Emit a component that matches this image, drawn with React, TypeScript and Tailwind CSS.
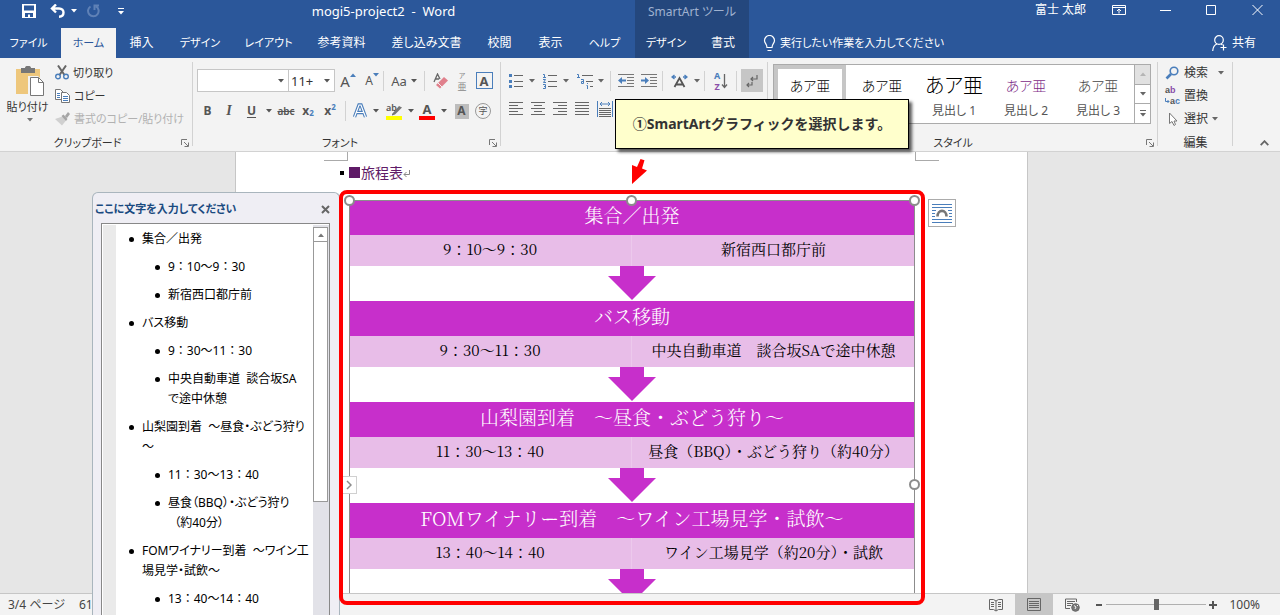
import type { ReactNode } from "react";

const serif = "font-['Noto_Serif_CJK_JP','Liberation_Serif','Noto_Sans_CJK_JP',serif]";

function Caret({ className = "" }: { className?: string }) {
  return (
    <svg width="6" height="4" viewBox="0 0 6 4" className={`shrink-0 ${className}`} fill="currentColor" aria-hidden="true">
      <path d="M0 0h6L3 3.5z" />
    </svg>
  );
}

function Tool({ label, className, children }: { label: string; className: string; children: ReactNode }) {
  return (
    <button type="button" aria-label={label} className={`flex h-[22px] shrink-0 items-center justify-center leading-4 ${className}`}>
      {children}
    </button>
  );
}

function Rule({ className = "" }: { className?: string }) {
  return <span className={`h-5 w-px shrink-0 bg-[#d2d2d2] ${className}`} />;
}

function Launcher({ label }: { label: string }) {
  return (
    <button type="button" aria-label={label} className="absolute right-1 bottom-[4px] text-[#777]">
      <svg width="8" height="8" viewBox="0 0 8 8" fill="none" stroke="currentColor" aria-hidden="true">
        <path d="M.5 6V.5H6M3 3l4 4M7.5 3.5v4h-4" />
      </svg>
    </button>
  );
}

function Group({ label, launcher, className, children }: { label?: string; launcher?: string; className: string; children: ReactNode }) {
  return (
    <section className={`relative flex shrink-0 flex-col ${className}`}>
      {children}
      {label && (
        <h2 className={`mt-auto h-4 text-center leading-4 text-[#333] ${launcher ? "pr-[18px] text-[11px]" : "text-[12px]"}`}>{label}</h2>
      )}
      {launcher && <Launcher label={launcher} />}
      <span className="absolute top-1 right-0 h-[84px] w-px bg-[#d2d2d2]" />
    </section>
  );
}

function Lines({ rows }: { rows: number[][] }) {
  return (
    <svg width="14" height="14" viewBox="0 0 14 14" stroke="#666" aria-hidden="true">
      {rows.map(([a, b], i) => (
        <path key={i} d={`M${a} ${i * 3 + 0.5}H${b}`} shapeRendering="crispEdges" />
      ))}
    </svg>
  );
}

const tabs = [
  { name: "ファイル", width: "w-[61px] pr-1 text-[11px]" },
  { name: "ホーム", width: "w-[55px] bg-[#f3f3f3] text-[11px] text-[#2b579a]" },
  { name: "挿入", width: "w-[51px]" },
  { name: "デザイン", width: "w-[66px] text-[11px]" },
  { name: "レイアウト", width: "w-[71px] text-[11px]" },
  { name: "参考資料", width: "w-[75px]" },
  { name: "差し込み文書", width: "w-[95px]" },
  { name: "校閲", width: "w-[51px]" },
  { name: "表示", width: "w-[51px]" },
  { name: "ヘルプ", width: "w-[57px] text-[11px]" },
];

function Header() {
  return (
    <header className="flex h-[58px] shrink-0 bg-[#2b579a] text-white">
      <div className="flex w-[635px] shrink-0 flex-col">
        <div className="flex h-7 items-center pb-1.5 pl-[22px]">
          <button type="button" aria-label="上書き保存" className="w-7">
            <svg width="14" height="14" viewBox="0 0 14 14" aria-hidden="true">
              <path d="M0 0h14v14H0z" fill="#fff" />
              <path d="M2 1.500h10v5H2zM3 9h8v4H8v-2.500H6V13H3z" fill="#2b579a" />
            </svg>
          </button>
          <button type="button" aria-label="元に戻す" className="flex w-[36px] items-center gap-1.5">
            <svg width="15" height="14" viewBox="0 0 15 14" fill="none" stroke="#fff" strokeWidth="2.400" aria-hidden="true">
              <path d="M6 .5 2 4.500l4 4M2.500 4.500H9c3 0 4.500 1.800 4.500 4S12 12.700 9 12.700" />
            </svg>
            <Caret />
          </button>
          <button type="button" aria-label="繰り返し" className="w-[32px]">
            <svg width="14" height="14" viewBox="0 0 14 14" fill="none" stroke="#5f81b6" strokeWidth="2" aria-hidden="true">
              <path d="M4.500 2.500A5.300 5.300 0 1 0 10 2.400M8.500 6V1.500H13" />
            </svg>
          </button>
          <button type="button" aria-label="クイック アクセス ツール バーのカスタマイズ" className="w-[14px]">
            <svg width="6" height="7" viewBox="0 0 6 7" fill="#fff" aria-hidden="true">
              <path d="M0 0h6v1H0zM0 3h6L3 6.500z" />
            </svg>
          </button>
          <h1 className="flex-1 text-center text-[13px] leading-5 whitespace-pre">mogi5-project2  -  Word</h1>
        </div>
        <nav className="flex h-[30px] text-[12px] leading-4">
          {tabs.map((t) => (
            <button key={t.name} type="button" className={`flex items-center justify-center whitespace-nowrap ${t.width}`}>
              {t.name}
            </button>
          ))}
        </nav>
      </div>
      <div className="flex w-[114px] shrink-0 flex-col bg-[#24477d]">
        <div className="flex h-7 items-center justify-center pb-1 text-[12px] leading-4 text-[#a0b2d0]">SmartArt ツール</div>
        <div className="flex h-[30px] text-[12px] leading-4">
          <button type="button" className="w-[62px] text-[11px]">デザイン</button>
          <button type="button" className="w-[52px]">書式</button>
        </div>
      </div>
      <div className="flex min-w-0 flex-1 flex-col">
        <div className="flex h-7 items-center justify-end pr-[17px] pb-2 text-[12px] leading-4">
          <span className="mr-[26px] text-[12px]">富士 太郎</span>
          <button type="button" aria-label="リボンの表示オプション" className="mr-[34px]">
            <svg width="14" height="10" viewBox="0 0 14 10" fill="none" stroke="#fff" aria-hidden="true">
              <path d="M.5.500h13v9H.5zM.5 2.500h13M7 8.500V4M5 6l2-2 2 2" />
            </svg>
          </button>
          <button type="button" aria-label="最小化" className="mr-[35px]">
            <svg width="11" height="10" viewBox="0 0 11 10" stroke="#fff" aria-hidden="true"><path d="M0 5.500h11" /></svg>
          </button>
          <button type="button" aria-label="最大化" className="mr-[35px]">
            <svg width="11" height="10" viewBox="0 0 11 10" fill="none" stroke="#fff" aria-hidden="true"><path d="M.5.500h9v9h-9z" /></svg>
          </button>
          <button type="button" aria-label="閉じる">
            <svg width="11" height="10" viewBox="0 0 11 10" stroke="#fff" aria-hidden="true"><path d="M.5 0l10 10M10.500 0l-10 10" /></svg>
          </button>
        </div>
        <div className="flex h-[30px] items-center pr-6 pl-[14px] text-[12px] leading-4">
          <svg width="13" height="17" viewBox="0 0 13 17" fill="none" stroke="#fff" strokeWidth="1.200" aria-hidden="true">
            <path d="M4 12.500C4 9 1.500 8.500 1.500 5.500a5 5 0 0 1 10 0C11.500 8.500 9 9 9 12.500zM4.500 15.500h4" />
          </svg>
          <input
            aria-label="操作アシスト"
            placeholder="実行したい作業を入力してください"
            className="ml-1 w-[220px] bg-transparent text-[11px] leading-4 outline-none placeholder:text-white placeholder:opacity-100"
          />
          <button type="button" className="ml-auto flex items-center gap-1">
            <svg width="16" height="16" viewBox="0 0 16 16" fill="none" stroke="#fff" strokeWidth="1.200" aria-hidden="true">
              <circle cx="7" cy="5" r="4.300" />
              <path d="M.7 16C1 12 3 9.700 5 9M9 9l1.500 1M11.500 9.500v6M8.500 12.500h6" />
            </svg>
            共有
          </button>
        </div>
      </div>
    </header>
  );
}

function ClipboardGroup() {
  return (
    <Group label="クリップボード" launcher="クリップボードの設定" className="w-[193px]">
      <div className="flex pt-[3px]">
        <button type="button" className="flex w-[55px] shrink-0 flex-col items-center pt-[5px] text-[11px] leading-4">
          <svg width="30" height="31" viewBox="0 0 30 31" className="ml-1" aria-hidden="true">
            <path d="M1 3h24v25H1z" fill="#eec77c" />
            <path d="M6 2h4c0-3 6-3 6 0h4v5H6z" fill="#777" />
            <path d="M13 10h10l6 6v15H13z" fill="#f3f3f3" />
            <path d="M15.500 11.500h8l5 5v13h-13z" fill="#fff" stroke="#777" />
            <path d="M23.500 11.500v5h5" fill="none" stroke="#777" />
          </svg>
          <span className="mt-[2px]">貼り付け</span>
          <Caret className="mt-[3px] ml-1 text-[#777]" />
        </button>
        <div className="flex flex-col text-[11px] leading-4 whitespace-nowrap">
          <button type="button" className="flex h-[23px] items-center gap-1">
            <svg width="14" height="15" viewBox="0 0 14 15" fill="none" aria-hidden="true">
              <path d="M3 .5 9.500 10M11 .5 4.500 10" stroke="#666" strokeWidth="2" />
              <circle cx="3" cy="11.500" r="2.300" stroke="#4a7ebb" strokeWidth="1.400" />
              <circle cx="11" cy="11.500" r="2.300" stroke="#4a7ebb" strokeWidth="1.400" />
            </svg>
            切り取り
          </button>
          <button type="button" className="flex h-[23px] items-center gap-1">
            <svg width="15" height="14" viewBox="0 0 15 14" fill="#fff" stroke="#777" aria-hidden="true">
              <path d="M.5.500h5l3 3v7h-8z" />
              <path d="M6.500 3.500h5l3 3v7h-8z" />
              <path d="M2 4.500h3M2 6.500h3M2 8.500h3M8 7.500h5M8 9.500h5M8 11.500h5" stroke="#4a7ebb" />
            </svg>
            コピー
          </button>
          <button type="button" disabled className="flex h-[23px] items-center gap-1 text-[#b1b1b1]">
            <svg width="15" height="14" viewBox="0 0 15 14" aria-hidden="true">
              <path d="m7.500 4.500 3.500 4-4 5L0 7z" fill="#d0d0d0" />
              <path d="m6.500 4 2-1.500 4 4.500-1.500 2zM10 4l3-4 2 2-3 4z" fill="#a5a5a5" />
            </svg>
            書式のコピー/貼り付け
          </button>
        </div>
      </div>
    </Group>
  );
}

function FontGroup() {
  return (
    <Group label="フォント" launcher="フォントの設定" className="w-[308px] pl-1 text-[#555]">
      <div className="flex items-center pt-[11px]">
        <div className="flex h-[23px] w-[92px] items-center border border-[#c6c6c6] bg-white pr-1">
          <input aria-label="フォント名" className="min-w-0 flex-1 outline-none" />
          <Caret />
        </div>
        <div className="-ml-px flex h-[23px] w-[47px] items-center border border-[#c6c6c6] bg-white pr-1 pl-0.5">
          <input aria-label="フォント サイズ" defaultValue="11+" className="min-w-0 flex-1 text-[13px] leading-5 text-[#333] outline-none" />
          <Caret />
        </div>
        <Tool label="フォント サイズの拡大" className="w-[26px] text-[15px]">
          A<Caret className="mb-3 rotate-180 text-[#4a7ebb]" />
        </Tool>
        <Tool label="フォント サイズの縮小" className="w-[22px] text-[12px]">
          A<Caret className="mb-3 text-[#4a7ebb]" />
        </Tool>
        <Rule />
        <Tool label="文字種の変換" className="w-10 gap-1 text-[13px]">
          Aa <Caret />
        </Tool>
        <Rule />
        <Tool label="すべての書式をクリア" className="w-[31px]">
          <svg width="15" height="16" viewBox="0 0 15 16" aria-hidden="true">
            <path d="M1 9 4.500 1 7 6M2.500 6H6" fill="none" stroke="#666" strokeWidth="1.300" />
            <path d="m3 12 8-8 4 3.500-8 8z" fill="#e0808c" />
            <path d="m4.500 9.500 4.500 4.500" stroke="#f3f3f3" />
          </svg>
        </Tool>
        <Tool label="ルビ" className="w-3 flex-col text-[#888]">
          <span className="text-[7px] leading-[11px]">ア</span>
          <span className="text-[9px] leading-[11px]">亜</span>
        </Tool>
        <Tool label="囲み線" className="ml-0.5 w-7">
          <span className="flex size-[17px] items-center justify-center border border-[#4a7ebb] text-[13px] leading-4 font-bold">A</span>
        </Tool>
      </div>
      <div className="flex items-center pt-2 text-[12px]">
        <Tool label="太字" className="w-[21px] font-bold">B</Tool>
        <Tool label="斜体" className="w-[22px] font-['Liberation_Serif',serif] text-[14px] font-bold italic">I</Tool>
        <Tool label="下線" className="w-[35px] gap-2.5 pl-1"><span className="font-bold underline underline-offset-2">U</span><Caret /></Tool>
        <Tool label="取り消し線" className="w-[22px] text-[10px] font-semibold line-through">abc</Tool>
        <Tool label="下付き" className="w-[22px] font-bold">x<sub className="text-[8px] leading-3 text-[#4a7ebb]">2</sub></Tool>
        <Tool label="上付き" className="w-[22px] font-bold">x<sup className="text-[8px] leading-3 text-[#4a7ebb]">2</sup></Tool>
        <Rule className="ml-1" />
        <Tool label="文字の効果と体裁" className="w-[35px] gap-1.5 pl-1">
          <svg width="14" height="16" viewBox="0 0 14 16" fill="none" aria-hidden="true">
            <path d="M1.500 14 6 2h2l4.500 12M3.500 9.500h7" stroke="#4a7ebb" strokeWidth="3.400" />
            <path d="M1.500 14 6 2h2l4.500 12M3.500 9.500h7" stroke="#fff" strokeWidth="1.200" />
          </svg>
          <Caret />
        </Tool>
        <Tool label="蛍光ペンの色" className="w-[33px] gap-1.5 pl-1">
          <svg width="16" height="17" viewBox="0 0 16 17" className="overflow-visible" aria-hidden="true">
            <text x="0" y="8" fontSize="9" fontWeight="600" fill="#555">ab</text>
            <path d="m6 11 7-8 3 1.500-7 7-3 1z" fill="#777" />
            <path d="M0 13h16v4H0z" fill="#ff0" />
          </svg>
          <Caret />
        </Tool>
        <Tool label="フォントの色" className="w-[34px] gap-1.5 pl-1">
          <span className="flex h-[18px] w-4 items-center justify-center border-b-4 border-[#f00] text-[13px] leading-4 font-bold">A</span>
          <Caret />
        </Tool>
        <Tool label="文字の網かけ" className="w-[27px]">
          <span className="flex h-[15px] w-[14px] items-center justify-center bg-[#bdbdbd] text-[12px] leading-4 font-bold">A</span>
        </Tool>
        <Tool label="囲い文字" className="w-4">
          <span className="flex size-4 shrink-0 items-center justify-center rounded-full border border-[#999] text-[9px] leading-3">字</span>
        </Tool>
      </div>
    </Group>
  );
}

function ParagraphGroup() {
  return (
    <Group className="w-[267px] pl-[8px] text-[#666]">
      <div className="flex items-center pt-[11px]">
        <Tool label="箇条書き" className="w-[34px] gap-1.5 pr-2">
          <svg width="14" height="14" viewBox="0 0 14 14" className="shrink-0" aria-hidden="true">
            <path d="M5 1.500h9M5 7.500h9M5 12.500h9" stroke="#666" />
            <path d="M0 0h3v3H0zM0 6h3v3H0zM0 11h3v3H0z" fill="#4a7ebb" />
          </svg>
          <Caret />
        </Tool>
        <Tool label="段落番号" className="w-[34px] gap-1.5 pr-2">
          <svg width="14" height="16" viewBox="0 0 14 16" className="shrink-0" fill="none" aria-hidden="true">
            <path d="M5 2.500h9M5 8.500h9M5 13.500h9" stroke="#666" />
            <path d="M0 1.500h1.500V4M0 4.500h3M0 6.500h2.500L.5 9.500H3M0 11.500h2.500v4H0M1 13.500h1.500" stroke="#4a7ebb" />
          </svg>
          <Caret />
        </Tool>
        <Tool label="アウトライン" className="w-[33px] gap-1 pr-1.5">
          <svg width="17" height="16" viewBox="0 0 17 16" className="shrink-0" fill="none" aria-hidden="true">
            <path d="M5 2.500h11M9 8.500h7M13 13.500h3" stroke="#666" />
            <path d="M0 1.500h1.500V4M0 4.500h3M4 6.500h2.500v4H4.500v-2h2M10.500 10v1M9.500 12.500h1V16" stroke="#4a7ebb" />
          </svg>
          <Caret />
        </Tool>
        <Rule />
        <Tool label="インデントを減らす" className="w-6 pl-[6px]">
          <svg width="17" height="14" viewBox="0 0 17 14" className="shrink-0" aria-hidden="true">
            <path d="M0 .5h16M9 3.500h7M9 6.500h7M9 9.500h7M0 12.500h16" stroke="#777" />
            <path d="M0 6.500l4-3.500v2.500h4v2H4V10z" fill="#4a7ebb" />
          </svg>
        </Tool>
        <Tool label="インデントを増やす" className="w-[23px] pl-[5px]">
          <svg width="17" height="14" viewBox="0 0 17 14" className="shrink-0" aria-hidden="true">
            <path d="M0 .5h16M9 3.500h7M9 6.500h7M9 9.500h7M0 12.500h16" stroke="#777" />
            <path d="M8 6.500 4 3v2.500H0v2h4V10z" fill="#4a7ebb" />
          </svg>
        </Tool>
        <Rule className="ml-1" />
        <Tool label="拡張書式" className="w-[41px] gap-1.5 pl-1">
          <svg width="17" height="14" viewBox="0 0 17 14" fill="none" className="shrink-0" aria-hidden="true">
            <path d="M3.500 13 8.500 4l5 9M5 10.500h7" stroke="#555" strokeWidth="1.800" />
            <path d="M3.500 1 1 3l2.500 2M1 3h4M13.500 1 16 3l-2.500 2M16 3h-4" stroke="#4a7ebb" strokeWidth="1.400" />
          </svg>
          <Caret />
        </Tool>
        <Rule />
        <Tool label="並べ替え" className="w-[31px]">
          <span className="flex w-2 flex-col text-[9px] leading-[11px] font-bold">
            <span className="text-[#4a7ebb]">A</span>
            <span className="text-[#8a4ea8]">Z</span>
          </span>
          <svg width="7" height="16" viewBox="0 0 7 16" fill="none" stroke="#666" strokeWidth="1.300" aria-hidden="true">
            <path d="M3.500 1v13M1 11.500l2.500 3 2.500-3" />
          </svg>
        </Tool>
        <Rule />
        <button type="button" aria-label="編集記号の表示/非表示" aria-pressed="true" className="ml-1 flex h-[23px] w-[22px] items-center justify-center bg-[#c6c6c6]">
          <svg width="12" height="14" viewBox="0 0 12 14" fill="none" stroke="#666" strokeWidth="1.200" aria-hidden="true">
            <path d="M11 1v4H5M7 3 5 5l2 2M6 8v3H1M3 9l-2 2 2 2" />
          </svg>
        </button>
      </div>
      <div className="flex items-center gap-2 pt-[9px]">
        <button type="button" aria-label="左揃え"><Lines rows={[[0, 14], [0, 9], [0, 14], [0, 9], [0, 14]]} /></button>
        <button type="button" aria-label="中央揃え"><Lines rows={[[0, 14], [3, 11], [0, 14], [3, 11], [0, 14]]} /></button>
        <button type="button" aria-label="右揃え"><Lines rows={[[0, 14], [5, 14], [0, 14], [5, 14], [0, 14]]} /></button>
        <button type="button" aria-label="両端揃え"><Lines rows={[[0, 14], [0, 14], [0, 14], [0, 14], [0, 14]]} /></button>
        <button type="button" aria-label="均等割り付け">
          <svg width="16" height="16" viewBox="0 0 16 16" fill="none" aria-hidden="true">
            <path d="M.5 0v16M15.500 0v16M3 3h10M5 1 3 3l2 2M11 1l2 2-2 2" stroke="#4a7ebb" />
            <path d="M2 7.500h12M2 9.500h12M2 11.500h12M2 13.500h12M2 15.500h12" stroke="#666" />
          </svg>
        </button>
      </div>
    </Group>
  );
}

const styles = [
  { id: "body", name: "", look: "text-[14px] text-black", frame: "border-4 border-[#c6c6c6]" },
  { id: "tight", name: "", look: "text-[14px] text-black", frame: "border-4 border-transparent" },
  { id: "h1", name: "見出し 1", look: "text-[20px] text-black", frame: "border-4 border-transparent" },
  { id: "h2", name: "見出し 2", look: "text-[14px] text-[#7c2a86]", frame: "border-4 border-transparent" },
  { id: "h3", name: "見出し 3", look: "text-[14px] text-[#444]", frame: "border-4 border-transparent" },
];

function StylesGroup() {
  return (
    <Group label="スタイル" launcher="スタイルの設定" className="w-[390px] pr-[7px] pl-[5px]">
      <div className="mt-[6px] flex h-[60px] border border-[#ababab] bg-white">
        {styles.map((s) => (
          <button key={s.id} type="button" className={`flex w-[72px] shrink-0 flex-col items-center ${s.frame}`}>
            <span className={`flex h-[34px] items-center leading-6 font-light whitespace-nowrap ${s.look}`}>あア亜</span>
            {s.name && <span className="text-[12px] leading-4 whitespace-nowrap text-[#555]">{s.name}</span>}
          </button>
        ))}
        <div className="flex flex-1 flex-col border-l border-[#ababab] text-[#666]">
          <button type="button" aria-label="前の行" className="flex flex-1 items-center justify-center border-b border-[#ababab] bg-[#e1e1e1] text-[#b5b5b5]"><Caret className="rotate-180" /></button>
          <button type="button" aria-label="次の行" className="flex flex-1 items-center justify-center border-b border-[#ababab]"><Caret /></button>
          <button type="button" aria-label="その他" className="flex flex-1 flex-col items-center justify-center gap-0.5"><span className="h-px w-1.5 bg-[#666]" /><Caret /></button>
        </div>
      </div>
    </Group>
  );
}

function EditGroup() {
  return (
    <Group label="編集" className="w-[75px] pt-[3px] text-[12px] leading-4">
      <button type="button" className="ml-[7px] flex h-[23px] items-center">
        <svg width="15" height="14" viewBox="0 0 15 14" className="mr-[4px]" fill="none" stroke="#4a7ebb" aria-hidden="true">
          <circle cx="9" cy="5" r="3.800" strokeWidth="1.600" />
          <path d="M6 8 1.500 12.500" strokeWidth="2.600" />
        </svg>
        検索<Caret className="ml-2.5 text-[#666]" />
      </button>
      <button type="button" className="ml-[7px] flex h-[23px] items-center">
        <span className="mr-[2px] flex w-[17px] flex-col font-['Liberation_Sans',sans-serif] text-[9px] leading-[11px] font-bold">
          <span className="flex">
            <span className="text-[#555]">a</span>
            <span className="text-[#8a4ea8]">b</span>
          </span>
          <span className="flex items-center">
            <svg width="5" height="6" viewBox="0 0 5 6" fill="none" stroke="#4a7ebb" aria-hidden="true"><path d="M.5 0v3.500H4M2.500 2 4 3.500 2.500 5" /></svg>
            <span className="text-[#555]">a</span>
            <span className="text-[#4a7ebb]">c</span>
          </span>
        </span>
        置換
      </button>
      <button type="button" className="ml-[7px] flex h-[23px] items-center">
        <svg width="15" height="14" viewBox="0 0 15 14" className="mr-[4px]" fill="#fff" stroke="#777" aria-hidden="true">
          <path d="M4.500 1v10.500l2.500-2 2 4 1.500-1-1.500-3.500h3z" />
        </svg>
        選択<Caret className="ml-1 text-[#666]" />
      </button>
    </Group>
  );
}

function DownArrow() {
  return (
    <svg width="48" height="35" viewBox="0 0 48 35" className="mx-auto block" fill="#c72fcb" aria-hidden="true">
      <path d="M12 0h24v10h12L24 34 0 10h12z" />
    </svg>
  );
}

const steps = [
  { title: "集合／出発", time: "9：10～9：30", place: "新宿西口都庁前" },
  { title: "バス移動", time: "9：30～11：30", place: "中央自動車道　談合坂SAで途中休憩" },
  { title: "山梨園到着　～昼食・ぶどう狩り～", time: "11：30～13：40", place: "昼食（BBQ）・ぶどう狩り（約40分）" },
  { title: "FOMワイナリー到着　～ワイン工場見学・試飲～", time: "13：40～14：40", place: "ワイン工場見学（約20分）・試飲" },
];

function Handle({ className }: { className: string }) {
  return <span className={`absolute size-[11px] rounded-full border-2 border-[#8c8c8c] bg-white ${className}`} />;
}

function SmartArt() {
  return (
    <div className={`relative mt-4 ${serif}`}>
      {steps.map((s) => (
        <section key={s.title}>
          <h3 className="h-[35px] bg-[#c72fcb] text-center text-[19px] leading-[30px] font-light whitespace-nowrap text-white">{s.title}</h3>
          <div className="grid h-[31px] grid-cols-2 bg-[#e8bde8] text-center text-[15px] leading-[28px] whitespace-nowrap text-black">
            <p className="border-r border-[#ecc9ec]">{s.time}</p>
            <p>{s.place}</p>
          </div>
          <DownArrow />
        </section>
      ))}
      <span className="absolute inset-0 border border-b-0 border-[#8c8c8c]" />
      <Handle className="-top-[5px] -left-[5px]" />
      <Handle className="-top-[5px] left-[277px]" />
      <Handle className="-top-[5px] -right-[5px]" />
      <Handle className="top-[279px] -right-[5px]" />
      <button type="button" aria-label="テキスト ウィンドウ" className="absolute top-[276px] -left-[9px] flex h-[18px] w-[17px] items-center justify-center border border-[#d0d0d0] bg-white">
        <svg width="6" height="10" viewBox="0 0 6 10" fill="none" stroke="#8c8c8c" strokeWidth="1.500" aria-hidden="true"><path d="m1 1 4 4-4 4" /></svg>
      </button>
      <button type="button" aria-label="レイアウト オプション" className="absolute -top-px -right-[41px] flex size-7 items-center justify-center border border-[#ababab] bg-white">
        <svg width="20" height="20" viewBox="0 0 20 20" fill="none" aria-hidden="true">
          <path d="M0 1.500h20M0 4.500h20M0 7.500h4M16 7.500h4M0 10.500h3M17 10.500h3M0 13.500h3M17 13.500h3M0 16.500h20M0 19.500h20" stroke="#4a7ebb" />
          <path d="M5.500 13.500C5.500 6 14.500 6 14.500 13.500" stroke="#777" strokeWidth="2.600" />
        </svg>
      </button>
    </div>
  );
}

const outline = [
  { level: 1, lines: ["集合／出発"] },
  { level: 2, lines: ["9：10～9：30"] },
  { level: 2, lines: ["新宿西口都庁前"] },
  { level: 1, lines: ["バス移動"] },
  { level: 2, lines: ["9：30～11：30"] },
  { level: 2, lines: ["中央自動車道  談合坂SA", "で途中休憩"] },
  { level: 1, lines: ["山梨園到着  ～昼食・ぶどう狩り", "～"] },
  { level: 2, lines: ["11：30～13：40"] },
  { level: 2, lines: ["昼食（BBQ）・ぶどう狩り", "  （約40分）"] },
  { level: 1, lines: ["FOMワイナリー到着  ～ワイン工", "場見学・試飲～"] },
  { level: 2, lines: ["13：40～14：40"] },
];

function TextPane() {
  return (
    <aside className="absolute top-[192px] bottom-0 left-[92px] flex w-[248px] flex-col rounded-t-md border border-b-0 border-[#a9b5bd] bg-[#efeef4] pr-[9px] pl-2">
      <div className="-ml-1.5 flex h-[30px] shrink-0 items-center justify-between pt-0.5">
        <h2 className="text-[11px] leading-4 font-bold text-[#1a4a80] [font-feature-settings:'palt']">ここに文字を入力してください</h2>
        <button type="button" aria-label="閉じる" className="text-[#666]">
          <svg width="9" height="9" viewBox="0 0 9 9" stroke="currentColor" strokeWidth="2" aria-hidden="true"><path d="m1 1 7 7M8 1 1 8" /></svg>
        </button>
      </div>
      <div className="flex min-h-0 flex-1 overflow-hidden border border-b-0 border-[#888] bg-white pt-px pl-px">
        <div className="w-[13px] shrink-0 bg-[#eaeaea]" />
        <ul className="flex flex-1 flex-col gap-2 pt-1 text-[12px] leading-5 text-black">
          {outline.map((o, i) => (
            <li key={i} className={o.level === 1 ? "flex gap-2 pl-[13px]" : "flex gap-2 pl-[39px]"}>
              <span className="mt-2 size-[5px] shrink-0 rounded-full bg-black" />
              <div className={o.lines.join("").match(/[ぁ-んァ-ヶ]/) ? "[font-feature-settings:'palt']" : "[font-feature-settings:normal]"}>
                {o.lines.map((l) => (
                  <p key={l} className="whitespace-pre">{l}</p>
                ))}
              </div>
            </li>
          ))}
        </ul>
        <div className="flex w-4 shrink-0 flex-col bg-[#e2e2e8] pt-0.5">
          <button type="button" aria-label="上へスクロール" className="flex h-[15px] w-[15px] shrink-0 items-center justify-center border border-[#999] bg-white text-[#777]">
            <Caret className="rotate-180" />
          </button>
          <div className="h-[260px] w-[15px] shrink-0 border border-t-0 border-[#999] bg-white" />
        </div>
      </div>
    </aside>
  );
}

function StatusBar() {
  return (
    <footer className="flex h-[22px] shrink-0 items-center border-t border-[#c6c6c6] bg-[#f3f3f3] pr-5 pl-2 text-[12px] leading-4 text-[#444]">
      <span className="w-[71px] [font-feature-settings:'palt']">3/4 ページ</span>
      <span>61</span>
      <div className="ml-auto flex h-full items-center">
        <button type="button" aria-label="閲覧モード" className="mr-3">
          <svg width="14" height="14" viewBox="0 0 14 14" fill="none" stroke="#666" aria-hidden="true">
            <path d="M.5 1.500h4L7 3l2.500-1.500h4v10h-4L7 13l-2.500-1.500h-4zM7 3v10M2 4.500h3M2 6.500h3M2 8.500h3M9 4.500h3M9 6.500h3M9 8.500h3" />
          </svg>
        </button>
        <button type="button" aria-label="印刷レイアウト" aria-pressed="true" className="flex h-full w-[38px] items-center justify-center bg-[#c6c6c6]">
          <svg width="14" height="13" viewBox="0 0 14 13" fill="none" stroke="#666" aria-hidden="true">
            <path d="M.5.500h13v12H.5zM2 3.500h10M2 5.500h10M2 7.500h10M2 9.500h10" />
          </svg>
        </button>
        <button type="button" aria-label="Web レイアウト" className="mr-4 ml-3">
          <svg width="15" height="14" viewBox="0 0 15 14" fill="none" stroke="#666" aria-hidden="true">
            <path d="M5 10.500H.5V1h11v3M2 3.500h8M2 5.500h6M2 7.500h4" />
            <circle cx="10.500" cy="9.500" r="3.800" fill="#777" />
            <path d="M9 7.500l2 1.500-1 2M12 7l1 1" stroke="#f3f3f3" />
          </svg>
        </button>
        <button type="button" aria-label="縮小" className="mr-1"><span className="block h-0.5 w-1.5 bg-[#555]" /></button>
        <input
          type="range"
          aria-label="ズーム"
          defaultValue={50}
          className="h-3 w-[100px] appearance-none bg-[linear-gradient(#b0b0b0,#b0b0b0)] bg-[length:100%_1px] bg-center bg-no-repeat [&::-webkit-slider-thumb]:h-[11px] [&::-webkit-slider-thumb]:w-[5px] [&::-webkit-slider-thumb]:appearance-none [&::-webkit-slider-thumb]:bg-[#666]"
        />
        <button type="button" aria-label="拡大" className="mr-3 ml-[3px]">
          <svg width="8" height="8" viewBox="0 0 8 8" fill="#555" aria-hidden="true"><path d="M3 0h2v3h3v2H5v3H3V5H0V3h3z" /></svg>
        </button>
        <span>100%</span>
      </div>
    </footer>
  );
}

export default function App() {
  return (
    <div className="relative flex h-screen flex-col overflow-hidden bg-[#e6e6e6] font-['Noto_Sans','Noto_Sans_CJK_JP',sans-serif] text-[#333]">
      <div className="flex shrink-0 flex-col [font-feature-settings:'palt']">
        <Header />
        <div className="flex h-[94px] border-b border-[#d2d2d2] bg-[#f3f3f3]">
          <ClipboardGroup />
          <FontGroup />
          <ParagraphGroup />
          <StylesGroup />
          <EditGroup />
          <button type="button" aria-label="リボンを折りたたむ" className="mt-auto mr-[11px] mb-[5px] ml-auto">
            <svg width="9" height="6" viewBox="0 0 9 6" fill="none" stroke="#666" strokeWidth="1.800" aria-hidden="true"><path d="m.7 5.200 3.800-4 3.800 4" /></svg>
          </button>
        </div>
      </div>

      <main className="flex min-h-0 flex-1 justify-center overflow-hidden pr-[17px]">
        <article className="w-[793px] border-x border-[#c6c6c6] bg-white">
          <div className="flex justify-between px-[88px]">
            <span className="h-[9px] w-6 border-r border-b border-[#aaa]" />
            <span className="h-[9px] w-6 border-b border-l border-[#aaa]" />
          </div>
          <div className="pr-[112px] pl-[113px]">
            <h2 className="-ml-[9px] flex h-[23px] items-center text-[14px] leading-5 text-[#5f1a67]">
              <span className="mr-[5px] size-1 bg-black" />
              <span className="mr-px size-[11px] bg-[#5f1a67]" />
              旅程表
              <svg width="8" height="8" viewBox="0 0 8 8" fill="none" stroke="#888" className="mt-0.5" aria-hidden="true"><path d="M6.500 0v4.500H1M3.500 2 1 4.500 3.500 7" /></svg>
            </h2>
            <SmartArt />
          </div>
        </article>
      </main>

      <StatusBar />
      <TextPane />

      <div className="pointer-events-none absolute top-[190px] left-[339px] h-[415px] w-[586px] rounded-lg border-4 border-[#f00]" />
      <svg width="16" height="26" viewBox="0 0 16 26" className="absolute top-[159px] left-[631px]" fill="#f00" aria-hidden="true">
        <path d="M9.500 0 13.500 1.200 11 9.500l5 2L1 25V6l5 2z" />
      </svg>
      <div className="absolute top-[99px] left-[615px] flex h-[50px] w-[294px] items-center justify-center border border-black bg-[#ffffcc] text-[14px] leading-5 font-bold whitespace-nowrap shadow-[3px_3px_3px_rgba(0,0,0,0.65)]">
        ①SmartArtグラフィックを選択します。
      </div>
    </div>
  );
}
